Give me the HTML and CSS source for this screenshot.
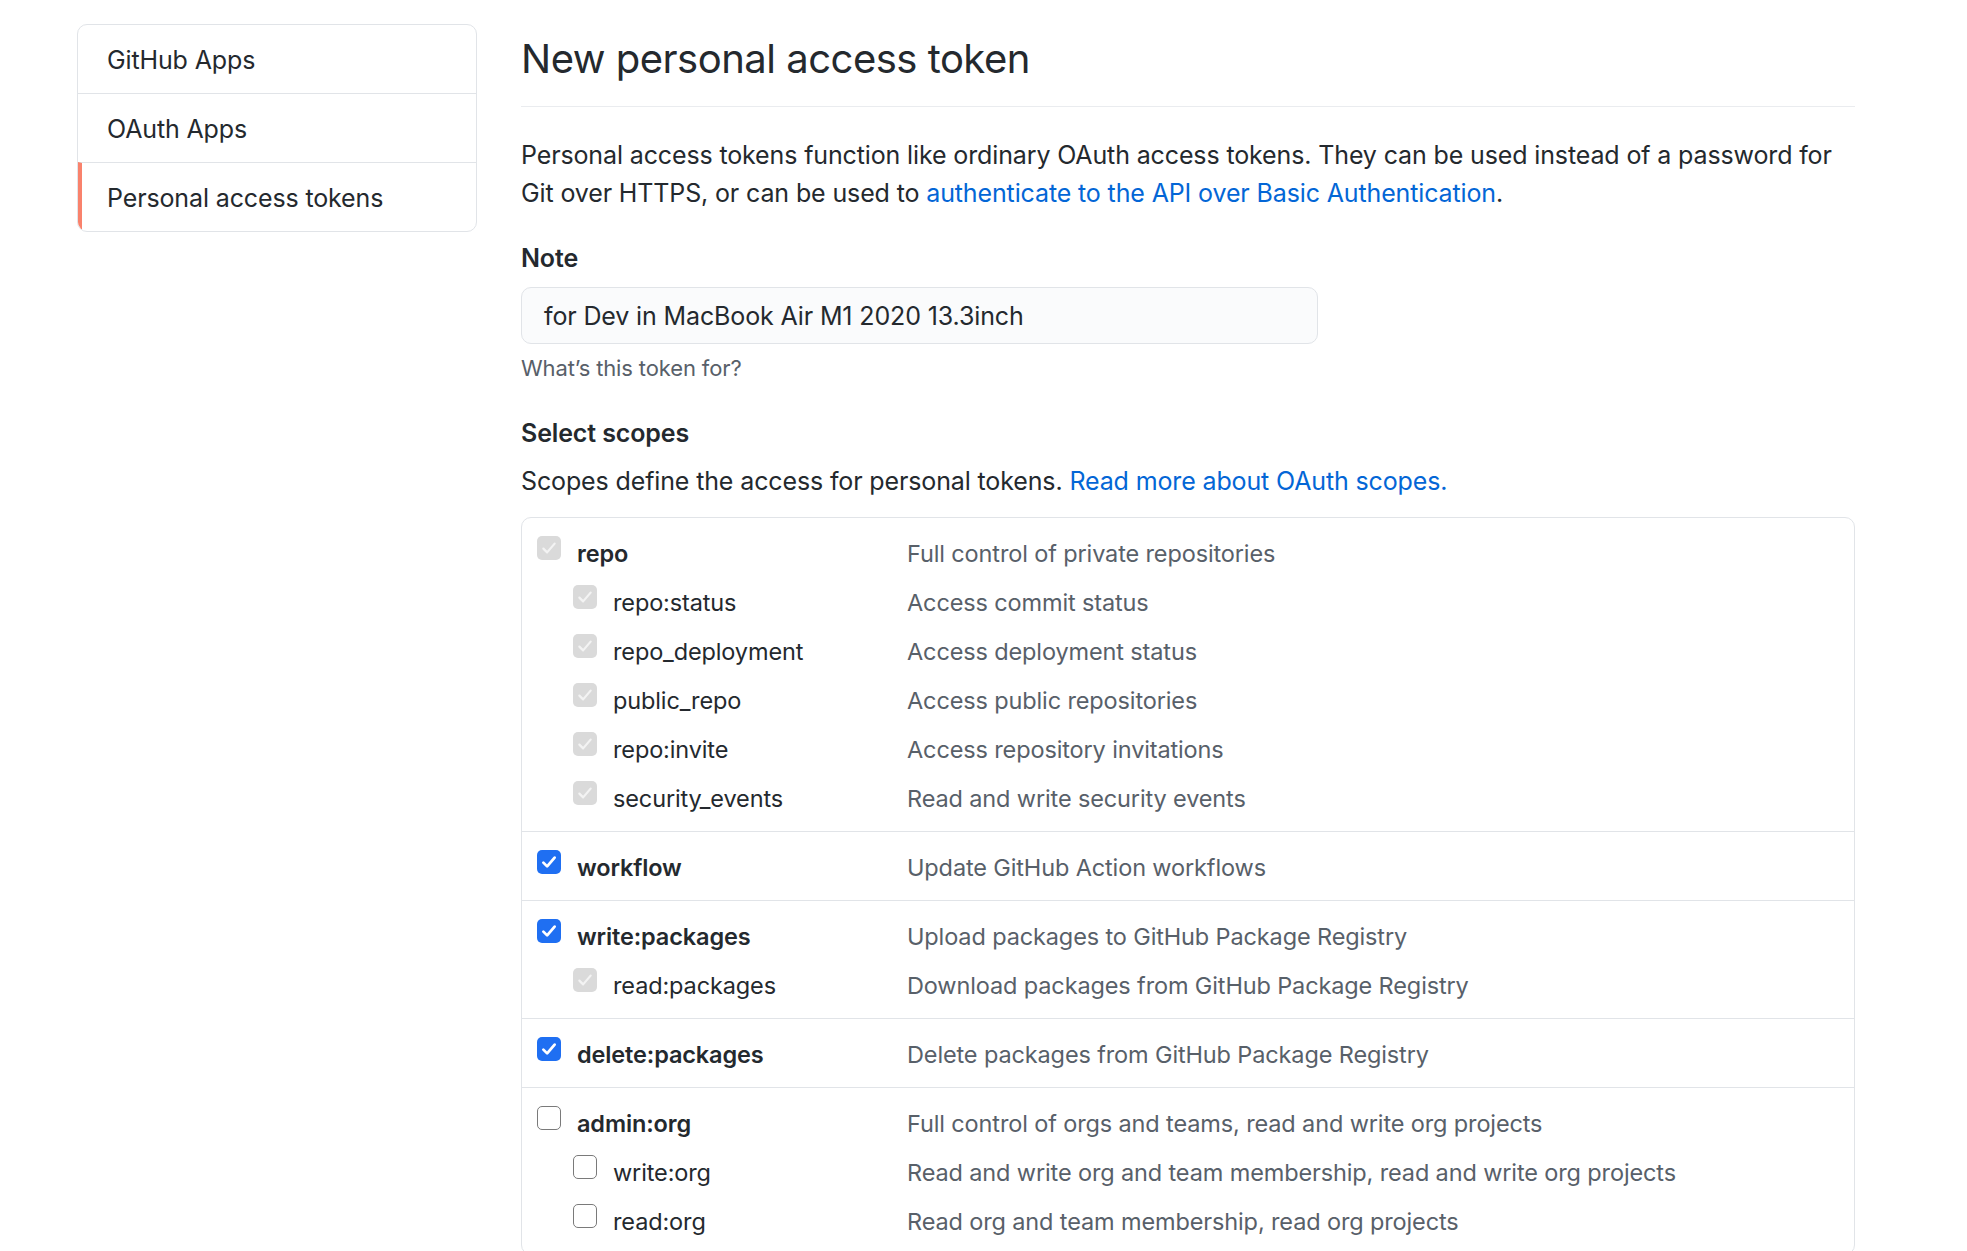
FILE: index.html
```html
<!DOCTYPE html>
<html lang="en">
<head>
<meta charset="utf-8">
<title>New personal access token</title>
<link rel="stylesheet" href="styles.css">
</head>
<body>
<div class="layout">
  <nav class="menu">
    <a class="menu-item">GitHub Apps</a>
    <a class="menu-item">OAuth Apps</a>
    <a class="menu-item selected">Personal access tokens</a>
  </nav>
  <main class="main">
    <h2 class="title">New personal access token</h2>
    <p class="intro">Personal access tokens function like ordinary OAuth access tokens. They can be used instead of a password for Git over HTTPS, or can be used to <a class="link">authenticate to the API over Basic Authentication</a>.</p>
    <div class="field">
      <label class="field-label">Note</label>
      <div class="input">for Dev in MacBook Air M1 2020 13.3inch</div>
      <p class="note">What’s this token for?</p>
    </div>
    <h3 class="field-label scopes-title">Select scopes</h3>
    <p class="scopes-desc">Scopes define the access for personal tokens. <a class="link">Read more about OAuth scopes.</a></p>

    <div class="scopes">
      <div class="group">
        <div class="row"><div class="scope"><span class="cb disabled"><svg viewBox="0 0 16 16"><path d="M3.5 8.5l3 3 6-7"/></svg></span><span class="name parent">repo</span></div><div class="desc">Full control of private repositories</div></div>
        <div class="row"><div class="scope sub"><span class="cb disabled"><svg viewBox="0 0 16 16"><path d="M3.5 8.5l3 3 6-7"/></svg></span><span class="name">repo:status</span></div><div class="desc">Access commit status</div></div>
        <div class="row"><div class="scope sub"><span class="cb disabled"><svg viewBox="0 0 16 16"><path d="M3.5 8.5l3 3 6-7"/></svg></span><span class="name">repo_deployment</span></div><div class="desc">Access deployment status</div></div>
        <div class="row"><div class="scope sub"><span class="cb disabled"><svg viewBox="0 0 16 16"><path d="M3.5 8.5l3 3 6-7"/></svg></span><span class="name">public_repo</span></div><div class="desc">Access public repositories</div></div>
        <div class="row"><div class="scope sub"><span class="cb disabled"><svg viewBox="0 0 16 16"><path d="M3.5 8.5l3 3 6-7"/></svg></span><span class="name">repo:invite</span></div><div class="desc">Access repository invitations</div></div>
        <div class="row"><div class="scope sub"><span class="cb disabled"><svg viewBox="0 0 16 16"><path d="M3.5 8.5l3 3 6-7"/></svg></span><span class="name">security_events</span></div><div class="desc">Read and write security events</div></div>
      </div>
      <div class="group">
        <div class="row"><div class="scope"><span class="cb checked"><svg viewBox="0 0 16 16"><path d="M3.5 8.5l3 3 6-7"/></svg></span><span class="name parent">workflow</span></div><div class="desc">Update GitHub Action workflows</div></div>
      </div>
      <div class="group">
        <div class="row"><div class="scope"><span class="cb checked"><svg viewBox="0 0 16 16"><path d="M3.5 8.5l3 3 6-7"/></svg></span><span class="name parent">write:packages</span></div><div class="desc">Upload packages to GitHub Package Registry</div></div>
        <div class="row"><div class="scope sub"><span class="cb disabled"><svg viewBox="0 0 16 16"><path d="M3.5 8.5l3 3 6-7"/></svg></span><span class="name">read:packages</span></div><div class="desc">Download packages from GitHub Package Registry</div></div>
      </div>
      <div class="group">
        <div class="row"><div class="scope"><span class="cb checked"><svg viewBox="0 0 16 16"><path d="M3.5 8.5l3 3 6-7"/></svg></span><span class="name parent">delete:packages</span></div><div class="desc">Delete packages from GitHub Package Registry</div></div>
      </div>
      <div class="group">
        <div class="row"><div class="scope"><span class="cb"></span><span class="name parent">admin:org</span></div><div class="desc">Full control of orgs and teams, read and write org projects</div></div>
        <div class="row"><div class="scope sub"><span class="cb"></span><span class="name">write:org</span></div><div class="desc">Read and write org and team membership, read and write org projects</div></div>
        <div class="row"><div class="scope sub"><span class="cb"></span><span class="name">read:org</span></div><div class="desc">Read org and team membership, read org projects</div></div>
      </div>
    </div>
  </main>
</div>
</body>
</html>
```
FILE: styles.css
```css
* { box-sizing: border-box; }
html, body { margin: 0; padding: 0; background: #fff; }
body {
  font-family: "Inter", "Liberation Sans", sans-serif;
  font-size: 25px;
  line-height: 37.5px;
  letter-spacing: -0.13px;
  color: #24292e;
  overflow: hidden;
}
.layout {
  display: flex;
  align-items: flex-start;
  gap: 44px;
  padding: 24px 0 0 77px;
}
.menu {
  width: 400px;
  flex: none;
  display: flex;
  flex-direction: column;
  border: 1px solid #e1e4e8;
  border-radius: 10px;
  overflow: hidden;
}
.menu-item {
  display: block;
  height: 69px;
  padding: 17px 29px 0;
  border-top: 1px solid #e1e4e8;
  color: #24292e;
  text-decoration: none;
}
.menu-item:first-child { border-top: none; height: 68px; }
.menu-item.selected {
  border-left: 4px solid #f9826c;
  padding-left: 25px;
}
.main {
  width: 1334px;
  flex: none;
}
.title {
  margin: 7.5px 0 0;
  font-size: 40px;
  line-height: 54px;
  font-weight: 400;
  letter-spacing: -0.5px;
  padding: 0 0 20px;
  border-bottom: 1px solid #eaecef;
}
.intro {
  margin: 29px 0 0;
  line-height: 38px;
}
.link { color: #0366d6; text-decoration: none; }
.field { margin-top: 28px; }
.field-label {
  display: block;
  font-weight: 600;
  font-size: 25px;
  line-height: 37.5px;
  margin: 0;
}
.input {
  margin-top: 9.5px;
  width: 797px;
  height: 57px;
  border: 1px solid #e1e4e8;
  border-radius: 10px;
  background: #fafbfc;
  padding: 10.5px 22px 0;
  font-size: 25px;
  line-height: 37.5px;
}
.note {
  margin: 8.5px 0 0;
  font-size: 22px;
  line-height: 32px;
  color: #586069;
}
.scopes-title { margin-top: 30.5px; }
.scopes-desc { margin: 10.5px 0 0; }
.scopes {
  margin-top: 17px;
  border: 1px solid #e1e4e8;
  border-radius: 10px;
}
.group { padding: 16.5px 0 2.5px; }
.group + .group { border-top: 1px solid #e1e4e8; }
.row {
  display: flex;
  height: 38px;
  margin-bottom: 11px;
  align-items: flex-start;
  font-size: 23.5px;
  line-height: 38px;
}
.scope {
  width: 385px;
  flex: none;
  display: flex;
  align-items: flex-start;
  padding-left: 15px;
}
.scope.sub { padding-left: 51px; }
.name { margin-left: 16px; }
.name.parent { font-weight: 600; }
.desc { color: #586069; }
.cb {
  flex: none;
  width: 24px;
  height: 24px;
  margin-top: 1.5px;
  border-radius: 5px;
  border: 1.5px solid #7a7a7a;
  background: #fff;
  display: flex;
  align-items: center;
  justify-content: center;
}
.cb svg { width: 20px; height: 20px; fill: none; stroke-width: 2.2; stroke-linecap: round; stroke-linejoin: round; }
.cb.checked { background: #1f6ff2; border: none; }
.cb.checked svg { stroke: #fff; }
.cb.disabled { background: #dadada; border: none; }
.cb.disabled svg { stroke: #f3f3f3; stroke-width: 1.8; }
```
